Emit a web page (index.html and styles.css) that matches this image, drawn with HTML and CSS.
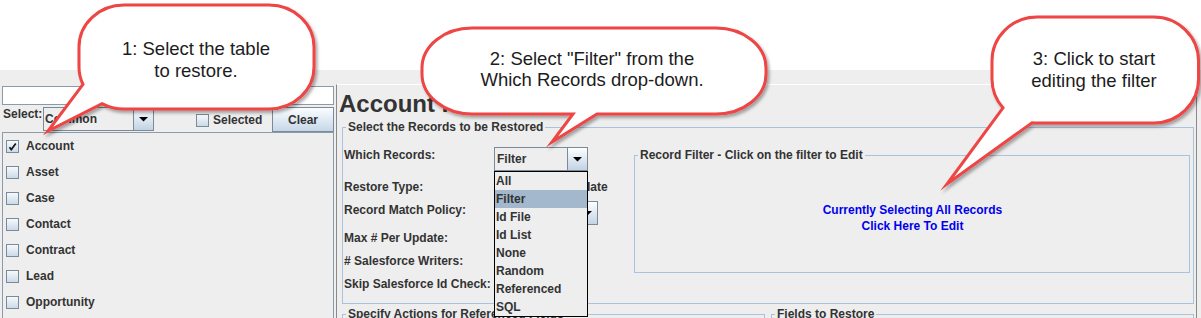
FILE: index.html
```html
<!DOCTYPE html>
<html>
<head>
<meta charset="utf-8">
<title>Restore</title>
<link rel="stylesheet" href="styles.css">
</head>
<body>
<div class="page">
  <div class="topspace"></div>
  <div class="window">
    <div class="left">
      <div class="textfield"></div>
      <div class="select-row">
        <span class="select-lbl">Select:</span>
        <div class="combo combo-common">
          <span class="combo-text">Common</span>
          <span class="combo-btn"><svg width="9" height="5" viewBox="0 0 9 5"><path d="M0 0H9L4.5 4.5Z" fill="#000"/></svg></span>
        </div>
        <span class="check check-selected"></span>
        <span class="selected-lbl">Selected</span>
        <button class="btn clear">Clear</button>
      </div>
      <div class="list">
        <div class="item"><span class="check"><svg width="11" height="11" viewBox="0 0 11 11"><path d="M2.5 6.2L4.3 8.6L8.8 2.6" fill="none" stroke="#111" stroke-width="1.7"/></svg></span><span>Account</span></div>
        <div class="item"><span class="check"></span><span>Asset</span></div>
        <div class="item"><span class="check"></span><span>Case</span></div>
        <div class="item"><span class="check"></span><span>Contact</span></div>
        <div class="item"><span class="check"></span><span>Contract</span></div>
        <div class="item"><span class="check"></span><span>Lead</span></div>
        <div class="item"><span class="check"></span><span>Opportunity</span></div>
      </div>
    </div>
    <div class="divider"></div>
    <div class="right">
      <h1 class="title">Account Restore</h1>
      <fieldset class="group records">
        <legend>Select the Records to be Restored</legend>
        <div class="records-body">
          <div class="form">
            <div class="flabel first">Which Records:</div>
            <div class="fctrl">
              <div class="combo combo-which">
                <span class="combo-text">Filter</span>
                <span class="combo-btn"><svg width="9" height="5" viewBox="0 0 9 5"><path d="M0 0H9L4.5 4.5Z" fill="#000"/></svg></span>
                <div class="popup">
                  <div class="opt">All</div>
                  <div class="opt sel">Filter</div>
                  <div class="opt">Id File</div>
                  <div class="opt">Id List</div>
                  <div class="opt">None</div>
                  <div class="opt">Random</div>
                  <div class="opt">Referenced</div>
                  <div class="opt">SQL</div>
                </div>
              </div>
            </div>
            <div class="flabel">Restore Type:</div>
            <div class="fctrl">
              <div class="radios"><span class="radio"></span><span class="radio second"></span><span>Update</span></div>
            </div>
            <div class="flabel third">Record Match Policy:</div>
            <div class="fctrl">
              <div class="combo combo-policy">
                <span class="combo-text"></span>
                <span class="combo-btn"><svg width="9" height="5" viewBox="0 0 9 5"><path d="M0 0H9L4.5 4.5Z" fill="#000"/></svg></span>
              </div>
            </div>
            <div class="flabel">Max # Per Update:</div>
            <div class="fctrl"><div class="smallfield"></div></div>
            <div class="flabel"># Salesforce Writers:</div>
            <div class="fctrl"><div class="smallfield"></div></div>
            <div class="flabel">Skip Salesforce Id Check:</div>
            <div class="fctrl"><span class="check skipcheck"></span></div>
          </div>
          <fieldset class="group filter">
            <legend>Record Filter - Click on the filter to Edit</legend>
            <div class="filter-body">
              <div class="link">Currently Selecting All Records<br>Click Here To Edit</div>
            </div>
          </fieldset>
        </div>
      </fieldset>
      <div class="bottom-row">
        <fieldset class="group half"><legend>Specify Actions for Referenced Fields</legend><div class="half-body"></div></fieldset>
        <fieldset class="group half"><legend>Fields to Restore</legend><div class="half-body"></div></fieldset>
      </div>
    </div>
  </div>

  <svg class="callouts" width="1201" height="318" viewBox="0 0 1201 318">
    <defs>
      <filter id="sh" x="-10%" y="-10%" width="130%" height="140%">
        <feDropShadow dx="2" dy="2.5" stdDeviation="1.6" flood-color="#000" flood-opacity="0.33"/>
      </filter>
    </defs>
    <g class="bubble" filter="url(#sh)">
      <path d="M124 5H269A45 42 0 0 1 314 47V67A45 42 0 0 1 269 109H124A45 42 0 0 1 102 103.6L48 131L83 84.4A45 42 0 0 1 79 67V47A45 42 0 0 1 124 5Z"/>
      <path d="M472 28H716A50 40 0 0 1 766 68V74A50 40 0 0 1 716 114H597L552 142L573 114H472A50 40 0 0 1 422 74V68A50 40 0 0 1 472 28Z"/>
      <path d="M1037 17H1153.5A45 44 0 0 1 1198.5 61V79A45 44 0 0 1 1153.5 123H1037A45 44 0 0 1 1032 122.7L947 184L1003 107.8A45 44 0 0 1 992 79V61A45 44 0 0 1 1037 17Z"/>
    </g>
    <g class="ctext">
      <text x="196" y="55">1: Select the table</text>
      <text x="196" y="77">to restore.</text>
      <text x="592" y="65">2: Select "Filter" from the</text>
      <text x="592" y="86">Which Records drop-down.</text>
      <text x="1094" y="65">3: Click to start</text>
      <text x="1094" y="87">editing the filter</text>
    </g>
  </svg>
</div>
</body>
</html>
```

FILE: styles.css
```css
* { box-sizing: border-box; }
html, body { margin: 0; padding: 0; }
body {
  width: 1201px;
  height: 318px;
  overflow: hidden;
  background: #fff;
  font-family: "Liberation Sans", Arial, sans-serif;
  font-size: 12px;
  font-weight: bold;
  color: #333;
}
.page { position: relative; width: 1201px; height: 318px; overflow: hidden; }
.topspace { height: 70px; background: #fff; }
.window {
  display: flex;
  background: #eeeeee;
  padding-top: 14px;
  height: 420px;
}

/* ---------- left panel ---------- */
.left { width: 334px; flex: none; padding-top: 2px; }
.textfield {
  margin-left: 2px;
  height: 19px;
  background: #fff;
  border: 1px solid #8d9aa8;
}
.select-row {
  display: flex;
  align-items: flex-start;
  height: 25px;
  margin-top: 2px;
  padding-left: 3px;
}
.select-lbl { width: 40px; line-height: 14px; flex: none; }
.combo {
  display: flex;
  height: 24px;
  border: 1px solid #7a8a99;
  background: #eeeeee;
  flex: none;
}
.combo-text { flex: 1; padding-left: 1px; line-height: 22px; white-space: nowrap; overflow: hidden; }
.combo-btn {
  width: 20px;
  flex: none;
  border-left: 1px solid #7a8a99;
  background: linear-gradient(#fdfeff, #c2d3e4);
  display: flex;
  align-items: center;
  justify-content: center;
}
.combo-common { width: 111px; }
.check {
  width: 13px;
  height: 13px;
  flex: none;
  border: 1px solid #7a8a99;
  background: linear-gradient(#f6f9fc, #cbdae8);
  display: flex;
  align-items: center;
  justify-content: center;
}
.check-selected { margin-left: 42px; margin-top: 7px; }
.selected-lbl { margin-left: 4px; margin-top: 6px; line-height: 14px; }
.btn {
  font: inherit;
  color: #333;
  border: 1px solid #7a8a99;
  background: linear-gradient(#fbfdff, #c6d7e8);
  padding: 0;
}
.clear { margin-left: auto; width: 62px; height: 25px; }
.list {
  margin-left: 2px;
  border: 1px solid #8d9aa8;
  height: 300px;
  padding-left: 3px;
}
.item { display: flex; align-items: center; gap: 7px; height: 26px; }

.divider { width: 2px; flex: none; }

/* ---------- right panel ---------- */
.right {
  flex: 1;
  margin-right: 4px;
  border-top: 1px solid #fff;
  border-left: 1px solid #8a8a8a;
  border-right: 1px solid #8a8a8a;
}
.title {
  margin: 5px 0 2px;
  padding-left: 2px;
  font-size: 24px;
  line-height: 28px;
  color: #333;
}
.group {
  margin: 0;
  border: 1px solid #a9c3de;
  padding: 0 0 0 1px;
  min-width: 0;
}
.group legend {
  padding: 0 2px;
  margin-left: 2px;
  line-height: 14px;
  color: #333;
}
.records { margin: 0 2px 0 5px; padding: 0 3px 8px 1px; }
.records-body { display: flex; }
.form {
  width: 290px;
  flex: none;
  padding-top: 13px;
  display: grid;
  grid-template-columns: 150px 1fr;
  grid-template-rows: 29px 25px 26px 23px 23px 22px;
}
.flabel { padding-top: 4px; line-height: 14px; white-space: nowrap; }
.flabel.first { padding-top: 1px; }
.flabel.third { padding-top: 2px; }
.fctrl { position: relative; }
.combo-which { position: relative; width: 94px; }
.combo-which .combo-text { padding-left: 2px; }
.combo-policy { width: 104px; }
.popup {
  position: absolute;
  left: -1px;
  top: calc(100% + 1px);
  width: 94px;
  border: 1px solid #000;
  background: #eeeeee;
  z-index: 5;
}
.opt { height: 18px; line-height: 18px; padding-left: 1px; white-space: nowrap; }
.opt.sel { background: #a3b8cc; }
.radios { display: flex; align-items: center; margin-top: 4px; height: 14px; gap: 4px; }
.radio {
  width: 13px; height: 13px; border-radius: 50%;
  border: 1px solid #7a8a99;
  background: linear-gradient(#f6f9fc, #cbdae8);
}
.radio.second { margin-left: 39px; }
.smallfield { margin-top: 2px; width: 60px; height: 19px; background: #fff; border: 1px solid #7a8a99; }
.skipcheck { margin-top: 4px; }

.filter { flex: 1; margin-top: 14px; height: 125px; }
.filter-body {
  height: 110px;
  padding-top: 2px;
  display: flex;
  align-items: center;
  justify-content: center;
}
.link { color: #0000ee; text-align: center; line-height: 16px; }

.bottom-row { display: flex; gap: 6px; margin: 3px 2px 0 5px; }
.half { flex: 1; }
.half-body { height: 100px; }

/* ---------- callouts ---------- */
.callouts { position: absolute; left: 0; top: 0; z-index: 10; pointer-events: none; }
.bubble path {
  fill: #fff;
  stroke: #ee4444;
  stroke-width: 3;
  stroke-linejoin: miter;
  stroke-miterlimit: 12;
}
.ctext text {
  font-family: "Liberation Sans", Arial, sans-serif;
  font-size: 18.5px;
  font-weight: normal;
  fill: #1c1c1c;
  text-anchor: middle;
}
```
